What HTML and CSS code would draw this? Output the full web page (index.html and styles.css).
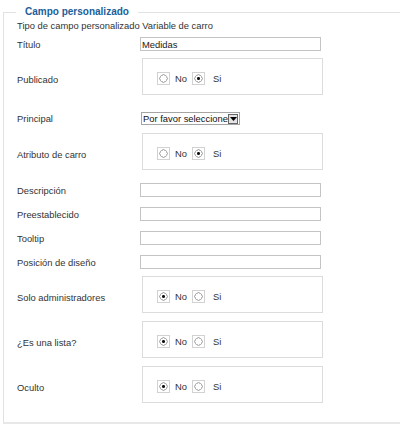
FILE: index.html
```html
<!DOCTYPE html>
<html lang="es">
<head>
    <meta charset="UTF-8">
    <title>Campo personalizado</title>
    <link rel="stylesheet" href="styles.css">
</head>
<body>
    <fieldset class="adminform">
        <legend>Campo personalizado</legend>

        <div class="row row-info">Tipo de campo personalizado Variable de carro</div>

        <div class="row">
            <label class="key" for="titulo">Título</label>
            <input type="text" id="titulo" class="inputbox" value="Medidas">
        </div>

        <div class="row row-radio">
            <span class="key">Publicado</span>
            <div class="radio-box">
                <input type="radio" name="publicado" id="pub0"><label for="pub0">No</label>
                <input type="radio" name="publicado" id="pub1" checked><label for="pub1">Si</label>
            </div>
        </div>

        <div class="row row-select">
            <label class="key" for="principal">Principal</label>
            <div class="select" id="principal">
                <span class="select-text">Por favor seleccione</span>
                <span class="select-btn">
                    <svg width="7" height="4" viewBox="0 0 7 4"><path d="M0 0h7L3.5 4z" fill="#000"/></svg>
                </span>
            </div>
        </div>

        <div class="row row-radio">
            <span class="key">Atributo de carro</span>
            <div class="radio-box">
                <input type="radio" name="atributo" id="atr0"><label for="atr0">No</label>
                <input type="radio" name="atributo" id="atr1" checked><label for="atr1">Si</label>
            </div>
        </div>

        <div class="row">
            <label class="key" for="descripcion">Descripción</label>
            <input type="text" id="descripcion" class="inputbox">
        </div>

        <div class="row">
            <label class="key" for="preestablecido">Preestablecido</label>
            <input type="text" id="preestablecido" class="inputbox">
        </div>

        <div class="row">
            <label class="key" for="tooltip">Tooltip</label>
            <input type="text" id="tooltip" class="inputbox">
        </div>

        <div class="row">
            <label class="key" for="posicion">Posición de diseño</label>
            <input type="text" id="posicion" class="inputbox">
        </div>

        <div class="row row-radio">
            <span class="key">Solo administradores</span>
            <div class="radio-box">
                <input type="radio" name="admin" id="adm0" checked><label for="adm0">No</label>
                <input type="radio" name="admin" id="adm1"><label for="adm1">Si</label>
            </div>
        </div>

        <div class="row row-radio">
            <span class="key">¿Es una lista?</span>
            <div class="radio-box">
                <input type="radio" name="lista" id="lis0" checked><label for="lis0">No</label>
                <input type="radio" name="lista" id="lis1"><label for="lis1">Si</label>
            </div>
        </div>

        <div class="row row-radio">
            <span class="key">Oculto</span>
            <div class="radio-box">
                <input type="radio" name="oculto" id="ocu0" checked><label for="ocu0">No</label>
                <input type="radio" name="oculto" id="ocu1"><label for="ocu1">Si</label>
            </div>
        </div>
    </fieldset>
</body>
</html>
```

FILE: styles.css
```css
body {
    margin: 0;
    padding: 0;
    background: #fff;
    font-family: "Liberation Sans", Arial, sans-serif;
    font-size: 9.4px;
    color: #333;
}
.adminform {
    margin: 6px 0 0 3px;
    padding: 0 12px 11px;
    width: calc(100% - 3px);
    box-sizing: border-box;
    border: 1px solid #e2e2e2;
    border-right: none;
    border-bottom: 2px solid #e8e8e8;
}
.adminform legend {
    padding: 0 9px;
    font-size: 10px;
    line-height: 12px;
    font-weight: bold;
    color: #1b6099;
}
.row {
    display: flex;
    align-items: center;
    height: 24px;
}
.row-info {
    height: 14px;
    padding-left: 1px;
}
.row-select {
    height: 28px;
    padding-top: 3px;
    box-sizing: border-box;
}
.row-radio {
    height: auto;
    margin: 2px 0 8px;
}
.row-radio .key {
    padding-top: 6px;
}
.key {
    width: 123px;
    padding-left: 1px;
    flex-shrink: 0;
}
.inputbox {
    width: 181px;
    height: 14px;
    box-sizing: border-box;
    margin: 0;
    padding: 0 1px;
    border: 1px solid #c4c4c4;
    font-family: inherit;
    font-size: 9.4px;
    color: #222;
    outline: none;
}
.radio-box {
    width: 181px;
    height: 37px;
    box-sizing: border-box;
    margin-left: 2px;
    padding: 13px 0 0 14px;
    border: 1px solid #dcdcdc;
    display: flex;
    align-items: flex-start;
}
.radio-box input {
    appearance: none;
    -webkit-appearance: none;
    width: 13px;
    height: 13px;
    margin: 0 5px 0 0;
    border: 1px solid #d2d2d2;
    background: radial-gradient(circle at 50% 50%, transparent 0 3px, #b0b0b0 3.2px 4px, transparent 4.3px);
}
.radio-box input:checked {
    background: radial-gradient(circle at 50% 50%, #111 0 1.3px, transparent 1.6px 3px, #b0b0b0 3.2px 4px, transparent 4.3px);
}
.radio-box label {
    line-height: 13px;
    margin-right: 5px;
}
.radio-box label + input {
    margin-right: 8px;
}
.select {
    display: flex;
    align-items: center;
    width: 99px;
    height: 13px;
    box-sizing: border-box;
    margin-left: 1px;
    border: 1px solid #a5a5a5;
    color: #111;
}
.select-text {
    flex: 1;
    padding-left: 1px;
    white-space: nowrap;
    overflow: hidden;
}
.select-btn {
    width: 10px;
    height: 10px;
    margin-right: 1px;
    border: 1px solid #666;
    background: #e4e4e4;
    box-sizing: border-box;
    display: flex;
    align-items: center;
    justify-content: center;
}
```
